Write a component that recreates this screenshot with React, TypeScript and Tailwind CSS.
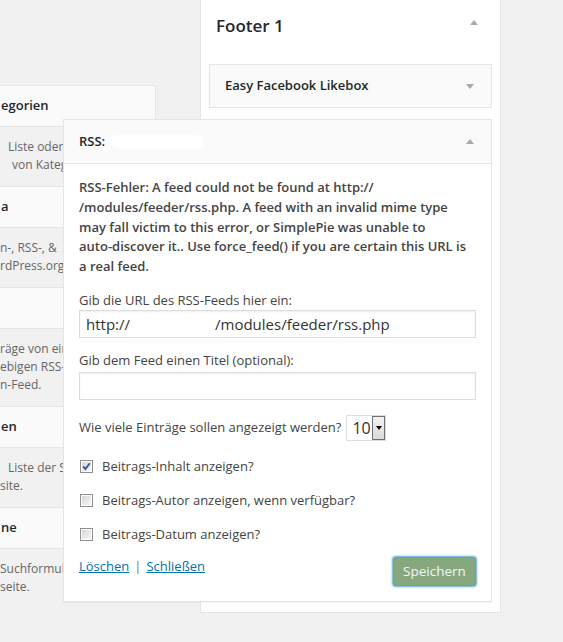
import React from "react";

function UpArrow() {
  return <span className="inline-block w-0 h-0 border-x-[4px] border-x-transparent border-b-[5px] border-b-[#a7aaad]" />;
}
function DownArrow() {
  return <span className="inline-block w-0 h-0 border-x-[4px] border-x-transparent border-t-[5px] border-t-[#a7aaad]" />;
}

function Checkbox({ checked }: { checked?: boolean }) {
  return (
    <svg width="13" height="13" viewBox="0 0 13 13" className="shrink-0">
      <defs>
        <linearGradient id="cbg" x1="0" y1="0" x2="1" y2="1">
          <stop offset="0" stopColor="#d6d6d6" />
          <stop offset="1" stopColor="#f7f7f7" />
        </linearGradient>
      </defs>
      <rect x="0.5" y="0.5" width="12" height="12" fill="#fff" stroke="#8f8f8f" />
      <rect x="2" y="2" width="9" height="9" fill="url(#cbg)" />
      {checked && (
        <path d="M3.2 6.4 L5.4 9 L9.8 3.2" fill="none" stroke="#3b4fa3" strokeWidth="1.8" strokeLinejoin="miter" />
      )}
    </svg>
  );
}

function LeftHeader({ text }: { text: string }) {
  return (
    <div className="h-[42px] border-y border-r border-[#e5e5e5] bg-[#fafafa] flex items-center font-semibold text-[13px] text-[#23282d] whitespace-nowrap overflow-hidden">
      <span className="pl-[1px]">{text}</span>
    </div>
  );
}

function LeftDesc({ lines }: { lines: { t: string; pl: string }[] }) {
  return (
    <div className="pt-[11px] pb-[12px] text-[12px] leading-[18px] text-[#666] whitespace-nowrap">
      <div className="w-[63px] overflow-hidden">
        {lines.map((l, i) => (
          <div key={i} className={l.pl}>
            {l.t}
          </div>
        ))}
      </div>
    </div>
  );
}

export default function App() {
  return (
    <div className="w-[563px] h-[642px] bg-[#f1f1f1] overflow-hidden font-['Open_Sans',sans-serif] flex items-start">
      {/* left column: available widgets */}
      <div className="w-[156px] shrink-0 mt-[85px]">
        <LeftHeader text="egorien" />
        <LeftDesc lines={[{ t: "Liste oder a", pl: "pl-[8px]" }, { t: "von Katego", pl: "pl-[12px]" }]} />
        <LeftHeader text="a" />
        <LeftDesc lines={[{ t: "n-, RSS-, &", pl: "pl-0" }, { t: "rdPress.org-", pl: "pl-0" }]} />
        <LeftHeader text="" />
        <LeftDesc
          lines={[
            { t: "räge von ein", pl: "pl-0" },
            { t: "ebigen RSS-", pl: "pl-0" },
            { t: "n-Feed.", pl: "pl-0" },
          ]}
        />
        <LeftHeader text="en" />
        <LeftDesc lines={[{ t: "Liste der Se", pl: "pl-[8px]" }, { t: "site.", pl: "pl-0" }]} />
        <LeftHeader text="ne" />
        <LeftDesc lines={[{ t: "Suchformula", pl: "pl-0" }, { t: "seite.", pl: "pl-0" }]} />
      </div>

      {/* sidebar Footer 1 */}
      <div className="ml-[44px] w-[301px] shrink-0 bg-white border-x border-b border-[#e5e5e5] pb-[10px]">
        <div className="h-[52px] flex items-center justify-between pl-[15px] pr-[22px]">
          <h3 className="text-[17px] font-semibold text-[#23282d]">Footer 1</h3>
          <span className="-mt-[7px] flex">
            <UpArrow />
          </span>
        </div>
        <div className="px-[8px] pt-[12px]">
          <div className="h-[44px] border border-[#e5e5e5] bg-[#fafafa] flex items-center justify-between pl-[15px] pr-[17px]">
            <span className="text-[13px] font-semibold text-[#23282d]">Easy Facebook Likebox</span>
            <DownArrow />
          </div>

          <div className="relative z-10 mt-[11px] ml-[-146px] border border-[#e5e5e5] bg-white shadow-[0_1px_1px_rgba(0,0,0,0.04)]">
            <div className="h-[44px] bg-[#fafafa] border-b border-[#e5e5e5] flex items-center justify-between pl-[15px] pr-[17px]">
              <span className="flex items-center text-[13px] font-semibold text-[#23282d]">
                RSS:
                <span className="inline-block ml-[6px] w-[92px] h-[14px] bg-white rounded-full blur-[1.5px]" />
              </span>
              <UpArrow />
            </div>
            <div className="px-[15px] pt-[14px] pb-[15px] text-[13px] text-[#444]">
              <p className="font-semibold leading-[19.75px] whitespace-nowrap">
                RSS-Fehler: A feed could not be found at http://
                <br />
                /modules/feeder/rss.php. A feed with an invalid mime type
                <br />
                may fall victim to this error, or SimplePie was unable to
                <br />
                auto-discover it.. Use force_feed() if you are certain this URL is
                <br />
                a real feed.
              </p>
              <div className="mt-[14px] leading-[19.5px]">Gib die URL des RSS-Feeds hier ein:</div>
              <div className="h-[28px] border border-[#ddd] shadow-[inset_0_1px_2px_rgba(0,0,0,0.07)] flex items-center pl-[6px] text-[15px] text-[#333] whitespace-pre">
                http://<span className="inline-block w-[85px]" />/modules/feeder/rss.php
              </div>
              <div className="mt-[13px] leading-[19.5px]">Gib dem Feed einen Titel (optional):</div>
              <div className="mt-[1px] h-[28px] border border-[#ddd] shadow-[inset_0_1px_2px_rgba(0,0,0,0.07)]" />
              <div className="mt-[15px] h-[26px] flex items-center">
                <span>Wie viele Einträge sollen angezeigt werden?</span>
                <div className="ml-[5px] h-[26px] w-[40px] border border-[#ddd] flex items-center">
                  <span className="pl-[5px] w-[25px] text-[16px] text-[#333] leading-none">10</span>
                  <span className="h-[24px] w-[14px] border border-[#707070] bg-gradient-to-b from-[#f2f2f2] to-[#dadada] flex items-center justify-center">
                    <span className="inline-block w-0 h-0 border-x-[3px] border-x-transparent border-t-[4px] border-t-black" />
                  </span>
                </div>
              </div>
              <div className="mt-[16px] flex flex-col gap-[14px]">
                <label className="h-[20px] flex items-center gap-[9px] pl-[1px]">
                  <Checkbox checked />
                  <span>Beitrags-Inhalt anzeigen?</span>
                </label>
                <label className="h-[20px] flex items-center gap-[9px] pl-[1px]">
                  <Checkbox />
                  <span>Beitrags-Autor anzeigen, wenn verfügbar?</span>
                </label>
                <label className="h-[20px] flex items-center gap-[9px] pl-[1px]">
                  <Checkbox />
                  <span>Beitrags-Datum anzeigen?</span>
                </label>
              </div>
              <div className="mt-[12px] flex items-start justify-between">
                <div className="leading-[19.5px]">
                  <a className="text-[#0073aa] underline">Löschen</a>
                  <span className="text-[#72777c] mx-[5px]">|</span>
                  <a className="text-[#0073aa] underline">Schließen</a>
                </div>
                <button className="h-[29px] w-[83px] rounded-[3px] border border-[#5b9dd9] bg-[#87a87f] text-[13.5px] text-[#f3f7f1] shadow-[0_0_2px_1px_rgba(30,140,190,0.7)]">
                  Speichern
                </button>
              </div>
            </div>
          </div>
        </div>
      </div>
    </div>
  );
}
